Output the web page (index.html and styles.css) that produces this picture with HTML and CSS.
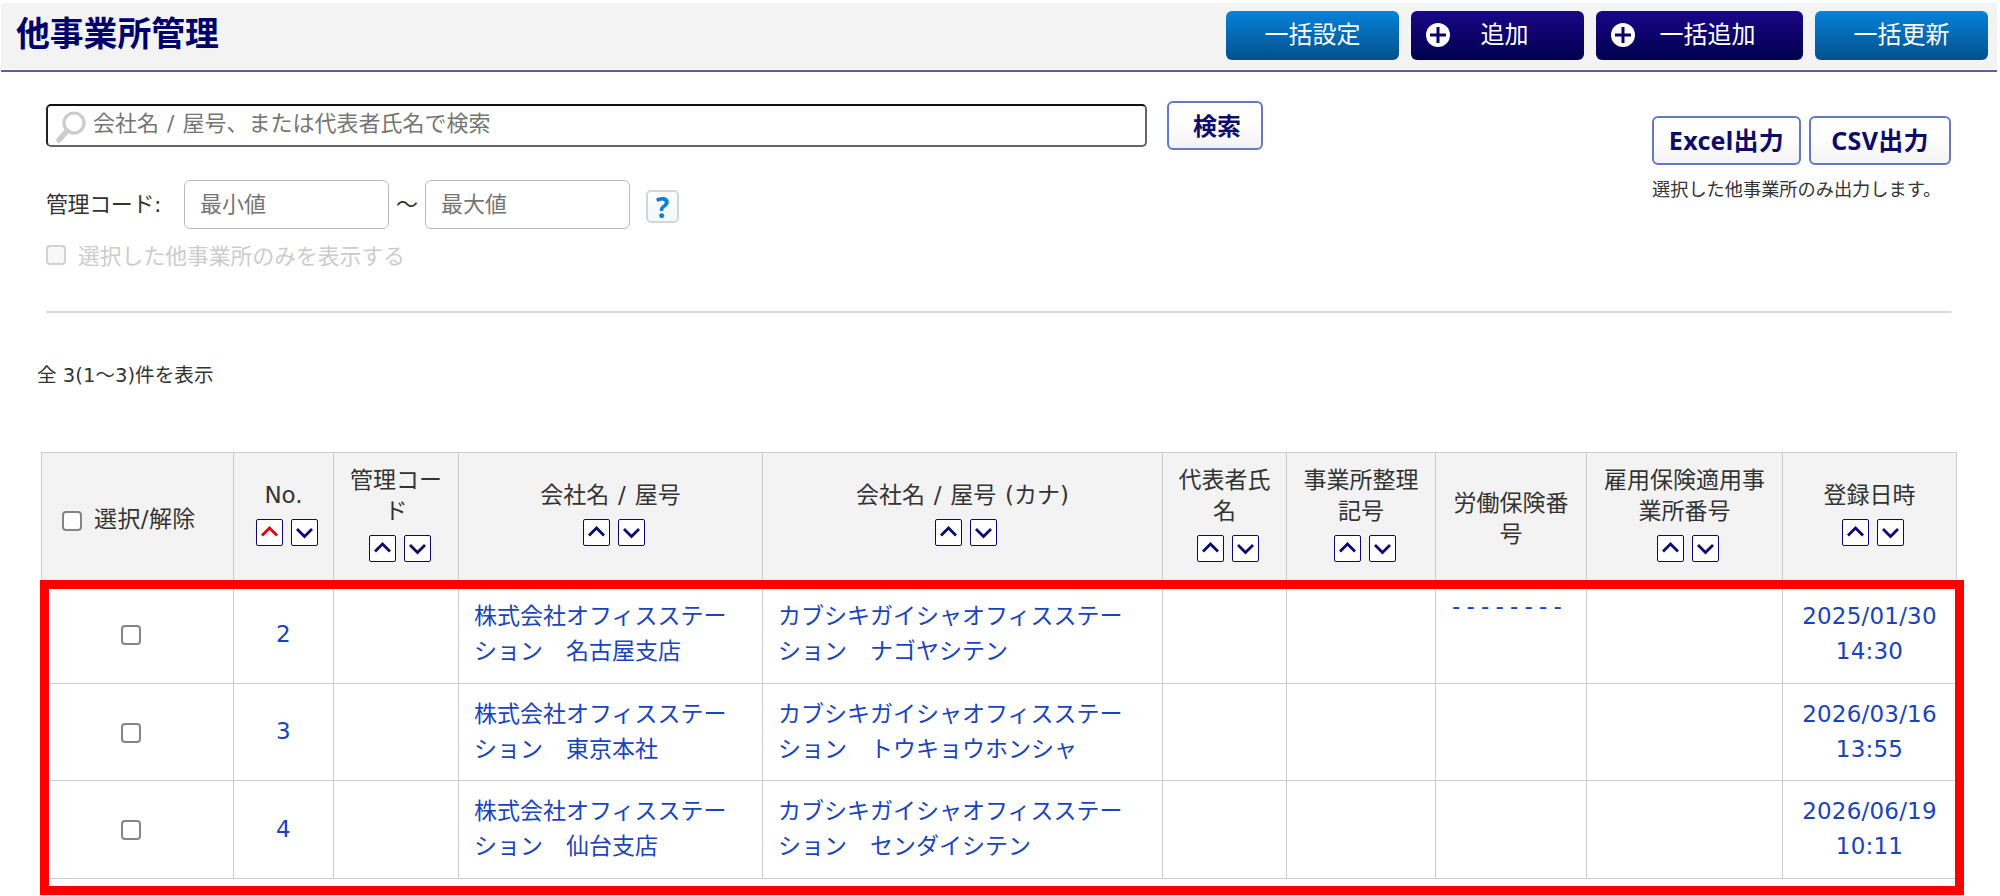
FILE: index.html
```
<!DOCTYPE html>
<html lang="ja">
<head>
    <meta charset="UTF-8">
    <meta name="viewport" content="width=device-width, initial-scale=1.0">
    <title>他事業所管理</title>
    <link rel="stylesheet" href="styles.css">
</head>
<body>
    <div class="page-header">
        <div class="header-inner">
            <h1>他事業所管理</h1>
            <div class="header-buttons">
                <button class="btn blue">一括設定</button>
                <button class="btn navy">
                    <svg class="plus" viewBox="0 0 24 24"><circle cx="12" cy="12" r="12" fill="#fff"/><path d="M12 4v16M4 12h16" stroke="#0c0266" stroke-width="3"/></svg>
                    追加
                </button>
                <button class="btn navy wide">
                    <svg class="plus" viewBox="0 0 24 24"><circle cx="12" cy="12" r="12" fill="#fff"/><path d="M12 4v16M4 12h16" stroke="#0c0266" stroke-width="3"/></svg>
                    一括追加
                </button>
                <button class="btn blue">一括更新</button>
            </div>
        </div>
    </div>

    <div class="search-area">
        <div class="search-left">
            <div class="search-row">
                <div class="search-box">
                    <svg class="glass" viewBox="0 0 30 34"><circle cx="18" cy="13" r="10" fill="none" stroke="#ccc" stroke-width="3.2"/><path d="M11 21L3 30" stroke="#ccc" stroke-width="5.5" stroke-linecap="round"/></svg>
                    <input type="text" placeholder="会社名 / 屋号、または代表者氏名で検索">
                </div>
                <button class="btn-line search-btn">検索</button>
            </div>
            <div class="code-row">
                <label>管理コード:</label>
                <input type="text" class="code" placeholder="最小値">
                <span class="tilde">～</span>
                <input type="text" class="code" placeholder="最大値">
                <button class="help">?</button>
            </div>
            <label class="only-selected"><input type="checkbox" disabled>選択した他事業所のみを表示する</label>
        </div>
        <div class="export">
            <div class="export-buttons">
                <button class="btn-line excel">Excel出力</button>
                <button class="btn-line csv">CSV出力</button>
            </div>
            <p>選択した他事業所のみ出力します。</p>
        </div>
    </div>

    <p class="count">全 3(1～3)件を表示</p>

    <!-- 並び替えアイコン -->
    <svg width="0" height="0" class="defs">
        <symbol id="up" viewBox="0 0 25 25"><path d="M5 15.5L12.5 8l7.5 7.5" fill="none" stroke="currentColor" stroke-width="2.8"/></symbol>
        <symbol id="down" viewBox="0 0 25 25"><path d="M5 9l7.5 7.5L20 9" fill="none" stroke="currentColor" stroke-width="2.8"/></symbol>
    </svg>

    <div class="table-wrap">
        <table>
            <colgroup>
                <col class="c-check"><col class="c-no"><col class="c-code"><col class="c-name"><col class="c-kana">
                <col class="c-rep"><col class="c-office"><col class="c-labor"><col class="c-emp"><col class="c-date">
            </colgroup>
            <thead>
                <tr>
                    <th class="all"><label><input type="checkbox">選択/解除</label></th>
                    <th>No.<div class="sort"><a class="active"><svg><use href="#up"/></svg></a><a><svg><use href="#down"/></svg></a></div></th>
                    <th>管理コード<div class="sort"><a><svg><use href="#up"/></svg></a><a><svg><use href="#down"/></svg></a></div></th>
                    <th>会社名 / 屋号<div class="sort"><a><svg><use href="#up"/></svg></a><a><svg><use href="#down"/></svg></a></div></th>
                    <th>会社名 / 屋号 (カナ)<div class="sort"><a><svg><use href="#up"/></svg></a><a><svg><use href="#down"/></svg></a></div></th>
                    <th>代表者氏名<div class="sort"><a><svg><use href="#up"/></svg></a><a><svg><use href="#down"/></svg></a></div></th>
                    <th>事業所整理記号<div class="sort"><a><svg><use href="#up"/></svg></a><a><svg><use href="#down"/></svg></a></div></th>
                    <th>労働保険番号</th>
                    <th>雇用保険適用事業所番号<div class="sort"><a><svg><use href="#up"/></svg></a><a><svg><use href="#down"/></svg></a></div></th>
                    <th>登録日時<div class="sort"><a><svg><use href="#up"/></svg></a><a><svg><use href="#down"/></svg></a></div></th>
                </tr>
            </thead>
            <tbody>
                <tr>
                    <td class="check"><input type="checkbox"></td>
                    <td class="center">2</td>
                    <td></td>
                    <td>株式会社オフィスステー<br>ション　名古屋支店</td>
                    <td>カブシキガイシャオフィスステー<br>ション　ナゴヤシテン</td>
                    <td></td>
                    <td></td>
                    <td class="labor">--------</td>
                    <td></td>
                    <td class="center">2025/01/30<br>14:30</td>
                </tr>
                <tr>
                    <td class="check"><input type="checkbox"></td>
                    <td class="center">3</td>
                    <td></td>
                    <td>株式会社オフィスステー<br>ション　東京本社</td>
                    <td>カブシキガイシャオフィスステー<br>ション　トウキョウホンシャ</td>
                    <td></td>
                    <td></td>
                    <td></td>
                    <td></td>
                    <td class="center">2026/03/16<br>13:55</td>
                </tr>
                <tr>
                    <td class="check"><input type="checkbox"></td>
                    <td class="center">4</td>
                    <td></td>
                    <td>株式会社オフィスステー<br>ション　仙台支店</td>
                    <td>カブシキガイシャオフィスステー<br>ション　センダイシテン</td>
                    <td></td>
                    <td></td>
                    <td></td>
                    <td></td>
                    <td class="center">2026/06/19<br>10:11</td>
                </tr>
            </tbody>
        </table>
        <div class="highlight"></div>
    </div>
</body>
</html>
```

FILE: styles.css
```
* {
    box-sizing: border-box;
}
body {
    margin: 0;
    height: 896px;
    background-color: #fff;
    color: #333;
    font-family: "DejaVu Sans", "Noto Sans CJK JP", sans-serif;
    font-size: 22px;
    overflow: hidden;
}
button, input {
    font-family: inherit;
    margin: 0;
}
p {
    margin: 0;
}
.page-header {
    margin: 3px 3px 0 1px;
    padding-bottom: 1px;
    border-bottom: 2px solid #5c5c9e;
}
.header-inner {
    display: flex;
    justify-content: space-between;
    height: 66px;
    padding: 8px 9px 0 15px;
    background-color: #f3f3f3;
}
h1 {
    margin: 0;
    color: #00006c;
    font-size: 33.8px;
    line-height: 48px;
}
.header-buttons {
    display: flex;
    gap: 12px;
}
.btn {
    position: relative;
    width: 173px;
    height: 49px;
    padding: 0 0 2px;
    border: none;
    border-radius: 6px;
    color: #fff;
    font-size: 24px;
    line-height: 46px;
}
.blue {
    background: linear-gradient(#0682da, #02508b);
}
.navy {
    background: linear-gradient(#1a0689, #01004c);
    padding-left: 14px;
}
.wide {
    width: 207px;
    padding-left: 16px;
}
.plus {
    position: absolute;
    left: 15px;
    top: 12px;
    width: 24px;
    height: 24px;
}

/* 検索 */
.search-area {
    display: flex;
    justify-content: space-between;
    margin: 29px 49px 0 46px;
    height: 212px;
    border-bottom: 2px solid #d9d9d9;
}
.search-row {
    display: flex;
    gap: 20px;
    align-items: center;
}
.search-box {
    display: flex;
    width: 1101px;
    height: 43px;
    border: 2px solid #666;
    border-top-color: #111;
    border-left-color: #222;
    border-radius: 5px;
}
.glass {
    width: 30px;
    height: 34px;
    margin: 4px 0 0 8px;
}
.search-box input {
    flex: 1;
    border: none;
    outline: none;
    padding: 0 0 5px 7px;
    background: none;
    font-size: 22px;
    word-spacing: 1px;
}
input::placeholder {
    color: #757575;
}
.btn-line {
    height: 49px;
    padding: 0 0 4px;
    border: 2px solid #6478c4;
    border-radius: 6px;
    background: linear-gradient(#fff 40%, #f3f3f3);
    color: #0d0b6c;
    font-family: "Noto Sans", "Noto Sans CJK JP", sans-serif;
    font-size: 25px;
    font-weight: bold;
}
.excel, .csv {
    letter-spacing: 0.3px;
}
.search-btn {
    width: 96px;
    padding: 0 0 3px 4px;
    font-size: 24px;
}
.code-row {
    display: flex;
    align-items: center;
    margin-top: 30px;
}
.code-row label {
    width: 138px;
    padding-bottom: 5px;
    letter-spacing: -0.4px;
}
.code {
    width: 205px;
    height: 49px;
    padding: 0 15px 0;
    border: 1px solid #bbb;
    border-radius: 6px;
    font-size: 22px;
}
.tilde {
    width: 36px;
    padding-bottom: 5px;
    text-align: center;
}
.help {
    width: 33px;
    height: 33px;
    margin: 4px 0 0 16px;
    padding: 0;
    border: 2px solid #d6d6d6;
    border-radius: 5px;
    background: linear-gradient(#fff, #f2f8fd);
    color: #0a80d4;
    font-family: "Noto Sans", sans-serif;
    font-size: 28px;
    font-weight: bold;
    line-height: 26px;
}
input[type=checkbox] {
    appearance: none;
    flex: none;
    width: 20px;
    height: 20px;
    border: 2px solid #858585;
    border-radius: 4px;
    background-color: #fff;
}
.only-selected {
    display: flex;
    align-items: center;
    margin-top: 11px;
    color: #ccc;
    font-size: 21.8px;
    line-height: 33px;
}
.only-selected input[type=checkbox] {
    margin: 0 12px 3px 0;
    border-color: #d2d2d2;
    background-color: #f8f8f8;
}
.export {
    width: 299px;
    margin-top: 15px;
}
.export-buttons {
    display: flex;
    gap: 8px;
}
.excel {
    width: 149px;
}
.csv {
    width: 142px;
}
.export p {
    margin-top: 10px;
    font-size: 18.2px;
    line-height: 30px;
    white-space: nowrap;
}
.count {
    margin: 48px 0 0 37px;
    font-size: 19.6px;
    line-height: 30px;
}

/* 一覧 */
.defs {
    display: block;
}
.table-wrap {
    position: relative;
    width: 1916px;
    margin: 61px 0 0 41px;
}
table {
    width: 1915px;
    table-layout: fixed;
    border-collapse: collapse;
    font-size: 23px;
}
th, td {
    border: 1px solid #ccc;
    padding: 0 15px;
}
th {
    height: 133px;
    background-color: #f3f3f3;
    font-weight: normal;
    line-height: 31px;
    word-break: break-all;
    word-spacing: 1.5px;
}
td {
    height: 97.5px;
    color: #1a44bb;
    line-height: 35px;
}
.c-check { width: 192px; }
.c-no { width: 100px; }
.c-code { width: 125px; }
.c-name { width: 304px; }
.c-kana { width: 400px; }
.c-rep { width: 124px; }
.c-office { width: 149px; }
.c-labor { width: 151px; }
.c-emp { width: 196px; }
.c-date { width: 174px; }
.all {
    padding: 0;
}
.all label {
    display: flex;
    align-items: center;
    padding-left: 20px;
    letter-spacing: 0.4px;
}
.all input {
    margin: 3px 12px 0 0;
}
.sort {
    display: flex;
    justify-content: center;
    gap: 8px;
    padding: 8px 0 12px 7px;
}
.sort a {
    width: 27px;
    height: 27px;
    border: 1px solid #0b0873;
    border-radius: 2px;
    background-color: #fff;
    color: #0b0873;
}
.sort svg {
    display: block;
    width: 25px;
    height: 25px;
}
.sort .active {
    color: #e60012;
}
.sort .active {
    border-color: #0b0873;
}
.center {
    padding: 0;
    text-align: center;
    letter-spacing: 0.2px;
}
.check {
    padding: 2px 13px 0 0;
    text-align: center;
    line-height: 0;
}
.labor {
    padding: 11px 0 0 16px;
    vertical-align: top;
    line-height: 19px;
    letter-spacing: 6.2px;
}
/* 一覧の行を囲む赤枠 */
.highlight {
    position: absolute;
    left: -1px;
    top: 128px;
    width: 1924px;
    height: 315px;
    border: 9px solid #f00;
}
```
